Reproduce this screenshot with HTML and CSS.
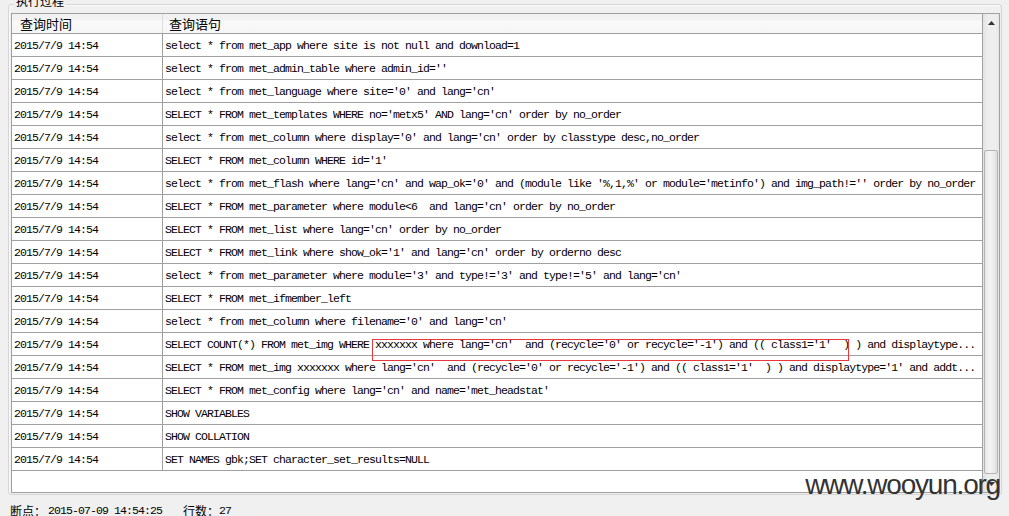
FILE: index.html
```html
<!DOCTYPE html>
<html lang="zh-CN">
<head>
<meta charset="utf-8">
<title>执行过程</title>
<link rel="stylesheet" href="styles.css">
</head>
<body>
<div class="groupbox">
  <div class="legend">执行过程</div>
  <div class="grid">
    <div class="table">
      <div class="head">
        <div class="hc1">查询时间</div>
        <div class="hc2">查询语句</div>
      </div>
      <div class="row"><div class="c1">2015/7/9 14:54</div><div class="c2">select * from met_app where site is not null and download=1</div></div>
      <div class="row"><div class="c1">2015/7/9 14:54</div><div class="c2">select * from met_admin_table where admin_id=''</div></div>
      <div class="row"><div class="c1">2015/7/9 14:54</div><div class="c2">select * from met_language where site='0' and lang='cn'</div></div>
      <div class="row"><div class="c1">2015/7/9 14:54</div><div class="c2">SELECT * FROM met_templates WHERE no='metx5' AND lang='cn' order by no_order</div></div>
      <div class="row"><div class="c1">2015/7/9 14:54</div><div class="c2">select * from met_column where display='0' and lang='cn' order by classtype desc,no_order</div></div>
      <div class="row"><div class="c1">2015/7/9 14:54</div><div class="c2">SELECT * FROM met_column WHERE id='1'</div></div>
      <div class="row"><div class="c1">2015/7/9 14:54</div><div class="c2">select * from met_flash where lang='cn' and wap_ok='0' and (module like '%,1,%' or module='metinfo') and img_path!='' order by no_order</div></div>
      <div class="row"><div class="c1">2015/7/9 14:54</div><div class="c2">SELECT * FROM met_parameter where module&lt;6  and lang='cn' order by no_order</div></div>
      <div class="row"><div class="c1">2015/7/9 14:54</div><div class="c2">SELECT * FROM met_list where lang='cn' order by no_order</div></div>
      <div class="row"><div class="c1">2015/7/9 14:54</div><div class="c2">SELECT * FROM met_link where show_ok='1' and lang='cn' order by orderno desc</div></div>
      <div class="row"><div class="c1">2015/7/9 14:54</div><div class="c2">select * from met_parameter where module='3' and type!='3' and type!='5' and lang='cn'</div></div>
      <div class="row"><div class="c1">2015/7/9 14:54</div><div class="c2">SELECT * FROM met_ifmember_left</div></div>
      <div class="row"><div class="c1">2015/7/9 14:54</div><div class="c2">select * from met_column where filename='0' and lang='cn'</div></div>
      <div class="row"><div class="c1">2015/7/9 14:54</div><div class="c2">SELECT COUNT(*) FROM met_img WHERE xxxxxxx where lang='cn'  and (recycle='0' or recycle='-1') and (( class1='1'  ) ) and displaytype...</div></div>
      <div class="row"><div class="c1">2015/7/9 14:54</div><div class="c2">SELECT * FROM met_img xxxxxxx where lang='cn'  and (recycle='0' or recycle='-1') and (( class1='1'  ) ) and displaytype='1' and addt...</div></div>
      <div class="row"><div class="c1">2015/7/9 14:54</div><div class="c2">SELECT * FROM met_config where lang='cn' and name='met_headstat'</div></div>
      <div class="row"><div class="c1">2015/7/9 14:54</div><div class="c2">SHOW VARIABLES</div></div>
      <div class="row"><div class="c1">2015/7/9 14:54</div><div class="c2">SHOW COLLATION</div></div>
      <div class="row"><div class="c1">2015/7/9 14:54</div><div class="c2">SET NAMES gbk;SET character_set_results=NULL</div></div>
      <div class="filler"></div>
    </div>
    <div class="scrollbar">
      <div class="sb-btn"><svg width="7" height="4" viewBox="0 0 7 4"><path d="M3.5 0 L7 4 L0 4 Z" fill="#333"/></svg></div>
      <div class="sb-track"><div class="sb-thumb"></div></div>
      <div class="sb-btn"><svg width="7" height="4" viewBox="0 0 7 4"><path d="M0 0 L7 0 L3.5 4 Z" fill="#333"/></svg></div>
    </div>
    <div class="mark"></div>
  </div>
</div>
<div class="status">
  <span class="cjk">断点：</span><span class="mono first">2015-07-09 14:54:25</span><span class="cjk gap">行数：</span><span class="mono">27</span>
</div>
<div class="watermark">www.wooyun.org</div>
</body>
</html>
```
FILE: styles.css
```css
html, body {
  margin: 0;
  padding: 0;
  background: #f0f0f0;
  overflow: hidden;
  height: 516px;
}
body {
  font-family: "Liberation Mono", "Noto Sans CJK SC", monospace;
  color: #000;
}
.groupbox {
  margin: 4px 0 0 8px;
  width: 994px;
  height: 491px;
  box-sizing: border-box;
  border: 1px solid #d5d5d5;
  border-radius: 3px;
  box-shadow: inset 1px 1px 0 #fafafa;
}
.legend {
  margin: -11px 0 0 5px;
  width: fit-content;
  padding: 0 2px;
  height: 14px;
  line-height: 14px;
  font-family: "Noto Sans CJK SC", sans-serif;
  font-size: 12px;
  background: #f0f0f0;
}
.grid {
  position: relative;
  margin: 5px 1px 0 2px;
  height: 480px;
  box-sizing: border-box;
  border: 1px solid #a0a0a0;
  display: flex;
  background: #fff;
}
.table {
  flex: 1;
  display: flex;
  flex-direction: column;
  border-right: 1px solid #a0a0a0;
  min-width: 0;
}
.head {
  display: flex;
  height: 20px;
  box-sizing: border-box;
  border-bottom: 1px solid #a0a0a0;
  background: linear-gradient(#f2f2f2 0, #f2f2f2 6px, #f9f9f9 7px, #f6f6f6 100%);
  font-family: "Noto Sans CJK SC", sans-serif;
  font-size: 13px;
  line-height: 19px;
}
.hc1 {
  width: 151px;
  box-sizing: border-box;
  padding-left: 8px;
  border-right: 1px solid #dcdcdc;
}
.hc2 {
  flex: 1;
  padding-left: 6px;
}
.row {
  display: flex;
  height: 23px;
  box-sizing: border-box;
  border-bottom: 1px solid #a0a0a0;
  font-size: 11.5px;
  letter-spacing: -0.9px;
  line-height: 21px;
  padding-top: 1px;
}
.c1 {
  width: 151px;
  box-sizing: border-box;
  padding-left: 2px;
  border-right: 1px solid #a0a0a0;
  margin-top: -1px;
  padding-top: 1px;
  white-space: pre;
}
.c2 {
  flex: 1;
  padding-left: 2px;
  white-space: pre;
  overflow: hidden;
}
.filler {
  flex: 1;
}
.scrollbar {
  width: 16px;
  display: flex;
  flex-direction: column;
  background: linear-gradient(to right, #e3e3e3, #ededed 30%, #eeeeee 80%, #e6e6e6);
}
.sb-btn {
  height: 17px;
  display: flex;
  align-items: center;
  justify-content: center;
}
.sb-track {
  flex: 1;
  display: flex;
  flex-direction: column;
  justify-content: flex-end;
  padding: 0 1px 1px 1px;
}
.sb-thumb {
  height: 324px;
  box-sizing: border-box;
  border: 1px solid #b4b4b4;
  border-radius: 2px;
  background: linear-gradient(to right, #e6e6e6, #f4f4f4 40%, #e8e8e8 80%, #dcdcdc);
}
.mark {
  position: absolute;
  left: 360px;
  top: 325px;
  width: 477px;
  height: 22px;
  box-sizing: border-box;
  border: 1px solid #e8383c;
}
.status {
  margin: 10px 0 0 10px;
  height: 12px;
  line-height: 12px;
  white-space: pre;
  display: flex;
  align-items: center;
}
.cjk {
  font-family: "Noto Sans CJK SC", sans-serif;
  font-size: 12px;
}
.mono {
  font-family: "Liberation Mono", monospace;
  font-size: 11.5px;
  letter-spacing: -0.9px;
}
.gap {
  margin-left: 21px;
}
.first {
  margin-left: 2px;
}
.watermark {
  position: absolute;
  right: 9px;
  top: 471px;
  font-family: "Liberation Sans", sans-serif;
  font-size: 28px;
  line-height: 28px;
  letter-spacing: -1.2px;
  color: #333;
}
```
